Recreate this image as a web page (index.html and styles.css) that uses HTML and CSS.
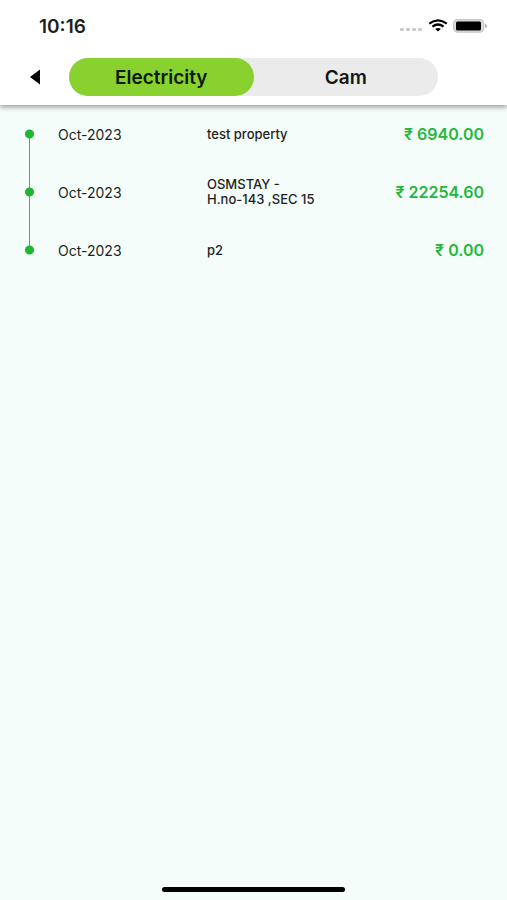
FILE: index.html
```html
<!DOCTYPE html>
<html lang="en">
<head>
<meta charset="utf-8">
<meta name="viewport" content="width=device-width, initial-scale=1">
<title>Electricity</title>
<link rel="stylesheet" href="styles.css">
</head>
<body>
<header class="top">
  <div class="status">
    <span class="clock">10:16</span>
    <svg class="status-icons" width="88" height="16" viewBox="0 0 88 16" aria-hidden="true">
      <g fill="#cbcbcb">
        <rect x="1" y="10" width="4" height="3" rx="1"/>
        <rect x="7" y="10" width="4" height="3" rx="1"/>
        <rect x="13" y="10" width="4" height="3" rx="1"/>
        <rect x="19" y="10" width="4" height="3" rx="1"/>
      </g>
      <g fill="none" stroke="#000" stroke-width="2.2">
        <path d="M30.2 5.6Q39 -1 47.8 5.6"/>
        <path d="M33.4 8.7Q39 4.3 44.6 8.7"/>
      </g>
      <path d="M36.2 11Q39 8.8 41.8 11L39 13.6Z"/>
      <rect x="54.6" y="1.6" width="30" height="12.6" rx="4" fill="#dcdcdc" stroke="#c6c6c6" stroke-width="1.2"/>
      <rect x="57" y="3.5" width="25" height="9" rx="1.5"/>
      <path d="M86 5.8Q88 6.5 88 8T86 10Z" fill="#aaa"/>
    </svg>
  </div>
  <div class="bar">
    <button class="back" type="button" aria-label="Back">
      <svg width="10" height="16" viewBox="0 0 10 16" aria-hidden="true"><path d="M0 8L10 .5V15.5Z"/></svg>
    </button>
    <nav class="tabs">
      <button class="tab active" type="button">Electricity</button>
      <button class="tab" type="button">Cam</button>
    </nav>
  </div>
</header>
<main class="content">
  <ul class="bills">
    <li class="bill">
      <span class="marker"></span>
      <span class="date">Oct-2023</span>
      <span class="property">test property</span>
      <span class="amount">₹ 6940.00</span>
    </li>
    <li class="bill">
      <span class="marker"></span>
      <span class="date">Oct-2023</span>
      <span class="property">OSMSTAY -<br>H.no-143 ,SEC 15</span>
      <span class="amount">₹ 22254.60</span>
    </li>
    <li class="bill">
      <span class="marker"></span>
      <span class="date">Oct-2023</span>
      <span class="property">p2</span>
      <span class="amount">₹ 0.00</span>
    </li>
  </ul>
</main>
<footer class="home"><div class="home-bar"></div></footer>
</body>
</html>
```
FILE: styles.css
```css
* {
  box-sizing: border-box;
}

body {
  margin: 0;
  min-height: 100vh;
  display: flex;
  flex-direction: column;
  background: #f4fdfa;
  color: #1c1f1e;
  font-family: Inter, "Liberation Sans", sans-serif;
}

.top {
  background: #fff;
  box-shadow: 0 2px 5px rgba(0, 0, 0, 0.4);
}

.status {
  height: 52px;
  padding: 0 20px 0 39px;
  display: flex;
  align-items: center;
  justify-content: space-between;
}

.clock {
  font-size: 19px;
  font-weight: 600;
}

.bar {
  display: grid;
  grid-template-columns: 69px 1fr 69px;
  padding: 6px 0 9px;
}

.back {
  border: 0;
  padding: 0;
  background: none;
  display: flex;
  align-items: center;
  justify-content: center;
}

.tabs {
  display: grid;
  grid-template-columns: 1fr 1fr;
  height: 38px;
  border-radius: 19px;
  background: #ebebeb;
}

.tab {
  border: 0;
  padding: 0;
  border-radius: 19px;
  background: none;
  color: #151515;
  font-family: inherit;
  font-size: 19px;
  font-weight: 600;
}

.tab.active {
  background: #88d12f;
  color: #0c1a04;
}

.content {
  flex: 1;
}

.bills {
  list-style: none;
  margin: 0;
  padding: 0 23px 0 25px;
}

.bill {
  display: grid;
  grid-template-columns: 33px 149px 1fr auto;
  align-items: center;
  min-height: 58px;
  font-size: 14px;
  line-height: 15px;
}

.property {
  font-size: 13px;
  font-weight: 500;
}

.marker {
  align-self: stretch;
  width: 9px;
  display: flex;
  flex-direction: column;
  align-items: center;
  background: radial-gradient(circle, #20b534 4px, transparent 5px);
}

.marker::before,
.marker::after {
  content: "";
  flex: 1;
  width: 1px;
  background: #858b88;
}

.marker::before {
  margin-bottom: 8px;
}

.bill:first-child .marker::before,
.bill:last-child .marker::after {
  background: none;
}

.amount {
  color: #25b73a;
  font-size: 16px;
  font-weight: 600;
}

.home {
  display: flex;
  justify-content: center;
  padding-bottom: 8px;
}

.home-bar {
  width: 36%;
  height: 5px;
  border-radius: 3px;
  background: #000;
}
```
